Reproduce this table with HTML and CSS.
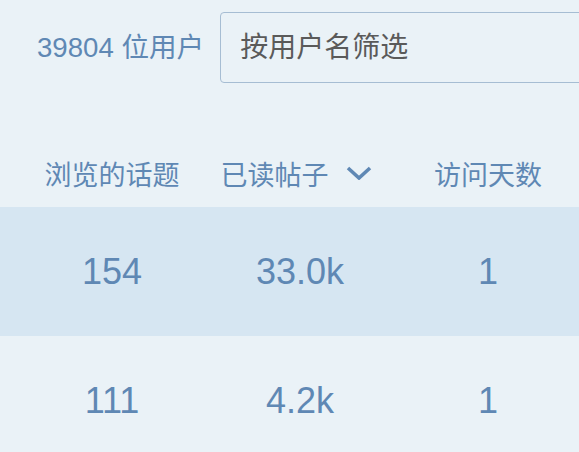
FILE: index.html
```html
<!DOCTYPE html>
<html lang="zh">
<head>
<meta charset="utf-8">
<title>用户</title>
<link rel="stylesheet" href="styles.css">
</head>
<body>
<div class="directory">
  <div class="controls">
    <span class="count">39804 位用户</span>
    <input class="filter" type="text" placeholder="按用户名筛选">
  </div>
  <div class="table">
    <div class="row header">
      <div class="cell">浏览的话题</div>
      <div class="cell sorted">已读帖子<svg class="chevron" viewBox="0 0 26 14" width="26" height="14"><path d="M2 2 L13 12 L24 2" fill="none" stroke="currentColor" stroke-width="3.6"/></svg></div>
      <div class="cell">访问天数</div>
    </div>
    <div class="row data highlight">
      <div class="cell">154</div>
      <div class="cell">33.0k</div>
      <div class="cell">1</div>
    </div>
    <div class="row data">
      <div class="cell">111</div>
      <div class="cell">4.2k</div>
      <div class="cell">1</div>
    </div>
  </div>
</div>
</body>
</html>
```

FILE: styles.css
```css
html, body {
  margin: 0;
  padding: 0;
  overflow: hidden;
  background: #eaf2f7;
}

body {
  font-family: "Liberation Sans", "Noto Sans CJK SC", sans-serif;
  color: #5f88b4;
}

.directory {
  width: 579px;
  overflow: hidden;
}

.controls {
  display: flex;
  align-items: center;
  padding: 12px 0 0 37px;
  gap: 16px;
}

.count {
  font-size: 27.6px;
  white-space: nowrap;
  flex: none;
  color: #5f88b4;
  padding-bottom: 5px;
}

.filter {
  flex: none;
  width: 420px;
  height: 71px;
  box-sizing: border-box;
  border: 1px solid #a6bdd3;
  border-radius: 4px;
  background: #eaf2f7;
  padding: 0 0 0 19px;
  margin: 0;
  font-family: "Liberation Sans", "Noto Sans CJK SC", sans-serif;
  font-size: 28px;
  color: #555;
  outline: none;
}

.filter::placeholder {
  color: #5a5a5a;
  opacity: 1;
}

.table {
  margin-top: 58px;
}

.row {
  display: grid;
  grid-template-columns: 188px 188px 188px;
  padding-left: 18px;
  align-items: center;
}

.header {
  height: 66px;
  font-size: 27px;
  padding-bottom: 2px;
  box-sizing: border-box;
}

.data {
  height: 129px;
  font-size: 36px;
}

.highlight {
  background: #d6e6f2;
}

.cell {
  display: flex;
  justify-content: center;
  align-items: center;
  white-space: nowrap;
}

.sorted {
  padding-right: 8px;
}

.chevron {
  margin-left: 17px;
  display: block;
}
```
